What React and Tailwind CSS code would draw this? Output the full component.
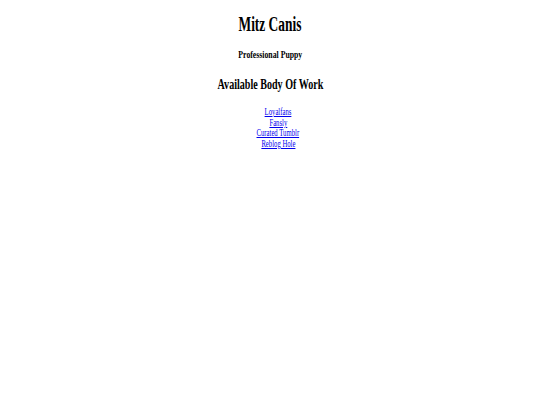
export default function App() {
  const links = ["Loyalfans", "Fansly", "Curated Tumblr", "Reblog Hole"];
  return (
    <div className="min-h-[405px] w-full bg-white text-black flex flex-col items-center font-['Liberation_Serif','Times_New_Roman',serif]">
      <h1 className="mt-[12px] text-[20px] leading-[24px] font-bold scale-x-[0.67]">Mitz Canis</h1>
      <h3 className="mt-[12px] text-[11px] leading-[13px] font-bold scale-x-[0.705]">Professional Puppy</h3>
      <h2 className="mt-[15.5px] text-[14px] leading-[16px] font-bold scale-x-[0.72]">Available Body Of Work</h2>
      <div className="mt-[14.5px] ml-[16px] flex flex-col items-center">
        {links.map((l) => (
          <a key={l} href="#" className="text-[10px] leading-[10.7px] text-[#0000ee] underline scale-x-[0.67]">
            {l}
          </a>
        ))}
      </div>
    </div>
  );
}
